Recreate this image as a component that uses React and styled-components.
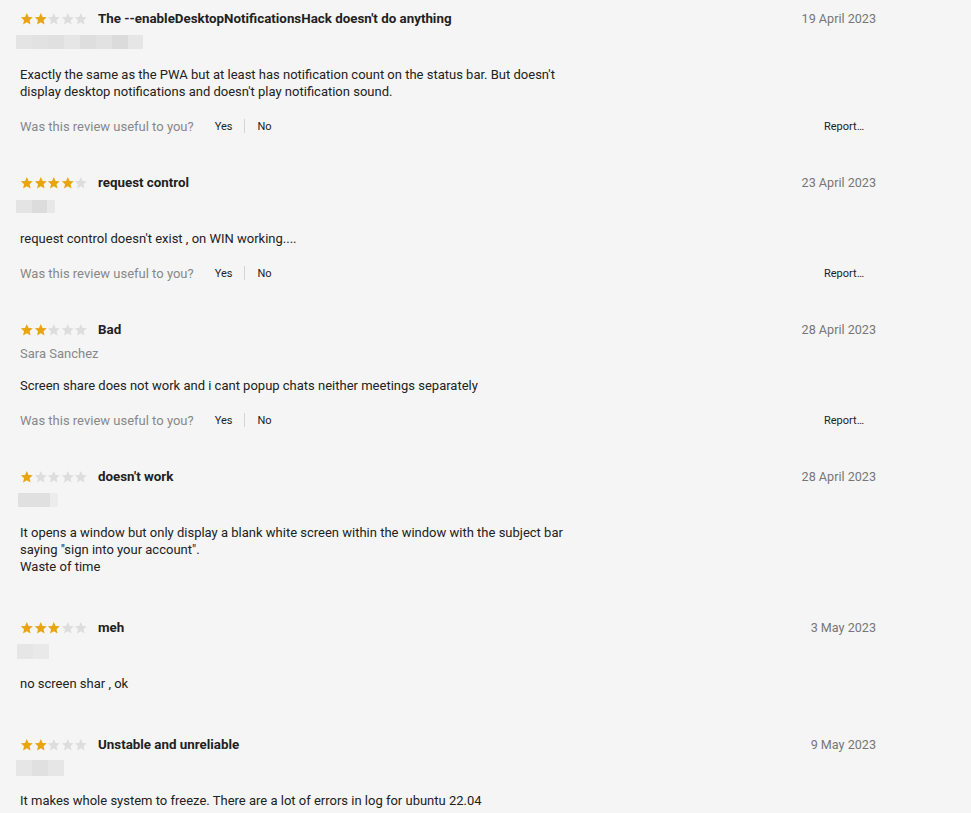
import React from 'react'
import styled, {createGlobalStyle} from 'styled-components'

const Global = createGlobalStyle`
    html, body {
        margin: 0;
        padding: 0;
        background: #f5f5f5;
    }
    body {
        font-family: Roboto, "Liberation Sans", Arial, sans-serif;
        font-size: 13px;
        color: #222;
    }
`

const List = styled.section`
    padding: 8px 95px 0 20px;
    min-height: 100vh;
    box-sizing: border-box;
`

const Review = styled.article`
    padding-bottom: 36px;
`

const Header = styled.div`
    display: flex;
    align-items: center;
    box-sizing: border-box;
    height: 20px;
    padding-top: 1px;
    line-height: 19px;
`

const Stars = styled.div`
    display: flex;
    width: 68px;
    margin-right: 10px;
`

const Title = styled.h3`
    margin: 0;
    flex: 1;
    font-size: 13.35px;
    font-weight: bold;
    color: #222;
`

const Date = styled.span`
    color: #777;
    font-size: 12.6px;
`

const NameRow = styled.div`
    display: flex;
    align-items: center;
    height: 20px;
    margin-top: 4px;
    color: #888;
`

const Mosaic = styled.div`
    display: flex;
    height: ${({h}) => h}px;
    margin-left: ${({offset}) => offset}px;
`

const Cell = styled.span`
    display: block;
    width: ${({w}) => w}px;
    background: ${({c}) => c};
`

const Body = styled.p`
    margin: 14px 0 0;
    max-width: 570px;
    line-height: 17px;
    padding-bottom: ${({last}) => last ? 6 : 7}px;
    white-space: pre-line;
`

const Feedback = styled.div`
    display: flex;
    align-items: center;
    height: 20px;
    margin-top: 9px;
`

const Question = styled.span`
    color: #888;
    margin-right: 21px;
`

const Vote = styled.button`
    border: none;
    background: none;
    padding: 0;
    font-family: inherit;
    font-size: 11px;
    color: #222;
    cursor: pointer;
`

const Divider = styled.span`
    width: 1px;
    height: 14px;
    background: #d4d4d4;
    margin: 0 12px;
`

const Report = styled(Vote)`
    margin-left: auto;
    margin-right: 12px;
`

function Star({on}) {
    return (
        <svg width="14" height="14" viewBox="0 0 24 24">
            <path
                d="M12 1.5l3.1 6.9 7.4.7-5.6 5 1.7 7.4L12 17.6l-6.6 3.9 1.7-7.4-5.6-5 7.4-.7z"
                fill={on ? '#e8a510' : '#dddddd'}
            />
        </svg>
    )
}

const reviews = [
    {
        rating: 2,
        title: "The --enableDesktopNotificationsHack doesn't do anything",
        date: '19 April 2023',
        mosaic: {h: 14, offset: -4, cells: [
            [16, '#e4e4e4'], [16, '#e2e2e2'], [16, '#e0e0e0'], [16, '#e6e6e6'],
            [16, '#dedede'], [16, '#e2e2e2'], [16, '#dbdbdb'], [15, '#e6e6e6'],
        ]},
        text: "Exactly the same as the PWA but at least has notification count on the status bar. But doesn't display desktop notifications and doesn't play notification sound.",
        feedback: true,
    },
    {
        rating: 4,
        title: 'request control',
        date: '23 April 2023',
        mosaic: {h: 13, offset: -4, cells: [[16, '#e4e4e4'], [15, '#dcdcdc'], [8, '#e8e8e8']]},
        text: "request control doesn't exist , on WIN working....",
        feedback: true,
    },
    {
        rating: 2,
        title: 'Bad',
        date: '28 April 2023',
        name: 'Sara Sanchez',
        text: 'Screen share does not work and i cant popup chats neither meetings separately',
        feedback: true,
    },
    {
        rating: 1,
        title: "doesn't work",
        date: '28 April 2023',
        mosaic: {h: 14, offset: -2, cells: [[32, '#e0e0e0'], [8, '#ececec']]},
        text: 'It opens a window but only display a blank white screen within the window with the subject bar saying "sign into your account".\nWaste of time',
    },
    {
        rating: 3,
        title: 'meh',
        date: '3 May 2023',
        mosaic: {h: 15, offset: -3, cells: [[16, '#e6e6e6'], [16, '#e9e9e9']]},
        text: 'no screen shar , ok',
    },
    {
        rating: 2,
        title: 'Unstable and unreliable',
        date: '9 May 2023',
        mosaic: {h: 16, offset: -4, cells: [[16, '#e6e6e6'], [16, '#e0e0e0'], [16, '#e6e6e6']]},
        text: 'It makes whole system to freeze. There are a lot of errors in log for ubuntu 22.04',
    },
]

export default function App() {
    return (
        <List>
            <Global/>
            {reviews.map((r, i) => (
                <Review key={i}>
                    <Header>
                        <Stars>
                            {[1, 2, 3, 4, 5].map(n => <Star key={n} on={n <= r.rating}/>)}
                        </Stars>
                        <Title>{r.title}</Title>
                        <Date>{r.date}</Date>
                    </Header>
                    <NameRow>
                        {r.name ? r.name : (
                            <Mosaic h={r.mosaic.h} offset={r.mosaic.offset}>
                                {r.mosaic.cells.map(([w, c], j) => <Cell key={j} w={w} c={c}/>)}
                            </Mosaic>
                        )}
                    </NameRow>
                    <Body last={!r.feedback}>{r.text}</Body>
                    {r.feedback && (
                        <Feedback>
                            <Question>Was this review useful to you?</Question>
                            <Vote>Yes</Vote>
                            <Divider/>
                            <Vote>No</Vote>
                            <Report>Report…</Report>
                        </Feedback>
                    )}
                </Review>
            ))}
        </List>
    )
}
